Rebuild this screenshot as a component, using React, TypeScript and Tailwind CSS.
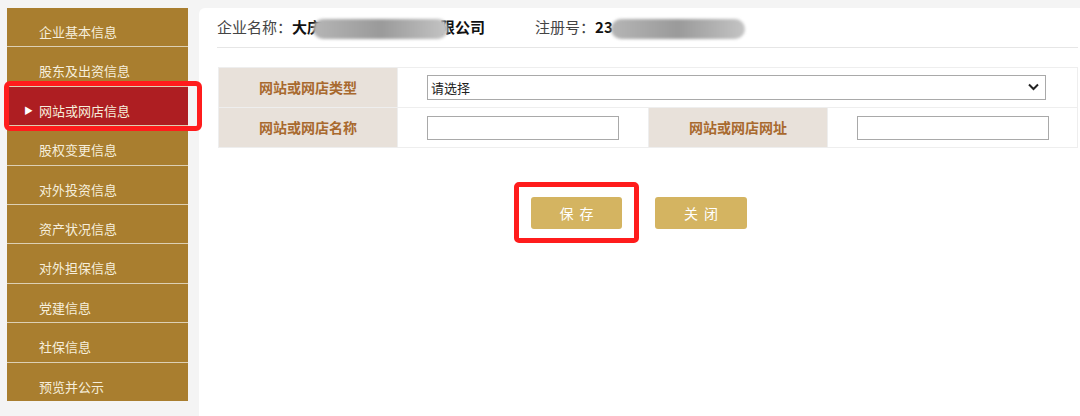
import React from 'react';

const MENU = [
  '企业基本信息',
  '股东及出资信息',
  '网站或网店信息',
  '股权变更信息',
  '对外投资信息',
  '资产状况信息',
  '对外担保信息',
  '党建信息',
  '社保信息',
  '预览并公示',
];

const ACTIVE = 2;

const Sidebar: React.FC = () => (
  <div className="relative w-[181px] h-[393px] flex flex-col gap-px bg-[#ddd0b4] self-start">
    {MENU.map((item, i) => (
      <div
        key={item}
        className={`flex-1 flex items-center pt-[9px] pl-[32px] text-[13px] text-[#f6eedc] ${
          i === ACTIVE ? 'bg-[#ae1e22]' : 'bg-[#a97e2f]'
        }`}
      >
        {i === ACTIVE && <span className="-ml-[15px] mr-[6px] text-[9px] text-white">▶</span>}
        {item}
      </div>
    ))}
    {/* annotation box round the active item */}
    <div className="absolute left-[-3px] top-[73px] w-[198px] h-[50px] border-[5px] border-[#ff1c1c] rounded-[6px]" />
  </div>
);

const Blurred: React.FC<{ w: number }> = ({ w }) => (
  <span
    className="relative z-10 inline-block h-[20px] rounded-full bg-gradient-to-r from-[#b5b5b5] via-[#9a9a9a] to-[#c4c4c4] blur-[1.5px] align-middle"
    style={{ width: w }}
  />
);

const Label: React.FC<{ children: React.ReactNode }> = ({ children }) => (
  <td className="w-[179px] h-[40px] bg-[#e8e1da] text-center text-[14px] font-bold text-[#a8692e] border border-[#eeeeee]">
    {children}
  </td>
);

export default function App() {
  return (
    <div
      className="w-[1080px] h-[416px] overflow-hidden bg-[#f4f4f4] flex gap-[11px] pl-[7px] pt-[8px]"
      style={{ fontFamily: '"Noto Sans CJK SC", "Noto Sans", sans-serif' }}
    >
      <Sidebar />

      <div className="flex-1 bg-white rounded-tl-[6px] pr-[2px]">
        {/* header */}
        <div className="h-[40px] ml-[18px] flex items-center border-b border-[#e6e6e6] text-[15px] text-[#444]">
          <span>企业名称：</span>
          <span className="font-bold text-[#111]">大庆</span>
          <span className="-ml-[9px] relative z-10"><Blurred w={135} /></span>
          <span className="font-bold text-[#111] -ml-[8px]">限公司</span>
          <span className="ml-[50px]">注册号：</span>
          <span className="font-bold text-[#111]">23</span>
          <span className="-ml-[2px]"><Blurred w={134} /></span>
        </div>

        {/* form table */}
        <table className="ml-[19px] mt-[19px] w-[860px] border-collapse">
          <tbody>
            <tr>
              <Label>网站或网店类型</Label>
              <td colSpan={3} className="h-[40px] border border-[#eeeeee] pl-[29px]">
                <div className="relative w-[619px] h-[25px] border border-[#a9a9a9] flex items-center pl-[3px] text-[13px] text-[#222]">
                  请选择
                  <svg className="absolute right-[6px] top-[7px]" width="11" height="8" viewBox="0 0 11 8">
                    <path d="M1 1.5 L5.5 6 L10 1.5" fill="none" stroke="#222" strokeWidth="2" />
                  </svg>
                </div>
              </td>
            </tr>
            <tr>
              <Label>网站或网店名称</Label>
              <td className="w-[251px] h-[40px] border border-[#eeeeee] pl-[29px]">
                <div className="w-[192px] h-[24px] border border-[#a9a9a9]" />
              </td>
              <Label>网站或网店网址</Label>
              <td className="h-[40px] border border-[#eeeeee] pl-[29px]">
                <div className="w-[192px] h-[24px] border border-[#a9a9a9]" />
              </td>
            </tr>
          </tbody>
        </table>

        {/* buttons */}
        <div className="mt-[49px] flex justify-center gap-[33px] pl-[1px]">
          <div className="relative">
            <button className="w-[91px] h-[32px] rounded-[3px] bg-[#d4b461] text-white text-[14px] tracking-[6px] pl-[6px]">
              保存
            </button>
            <div className="absolute left-[-17px] top-[-15px] w-[125px] h-[61px] border-[5px] border-[#ff1c1c] rounded-[5px]" />
          </div>
          <button className="w-[92px] h-[32px] rounded-[3px] bg-[#d4b461] text-white text-[14px] tracking-[6px] pl-[6px]">
            关闭
          </button>
        </div>
      </div>
    </div>
  );
}
